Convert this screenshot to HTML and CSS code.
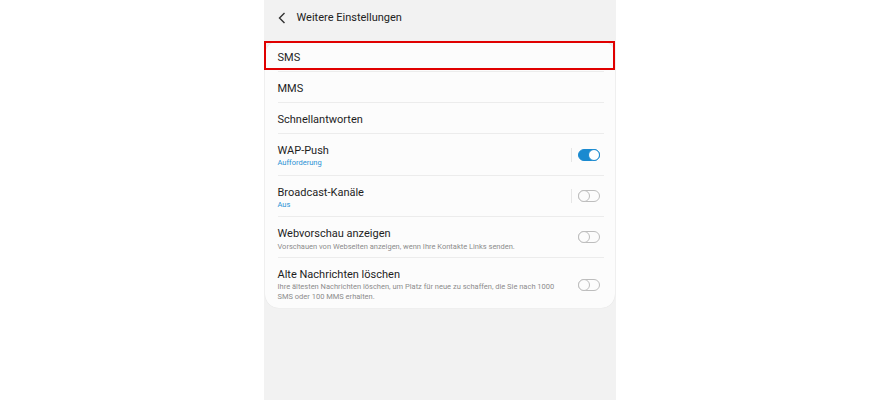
FILE: index.html
```html
<!DOCTYPE html>
<html lang="de">
<head>
<meta charset="utf-8">
<link rel="stylesheet" href="styles.css">
</head>
<body>
<div class="screen">
  <div class="header">
    <svg class="back" width="8" height="12" viewBox="0 0 8 12"><path d="M6.5 1 L1.5 6 L6.5 11" fill="none" stroke="#333" stroke-width="1.4"/></svg>
    <span class="title">Weitere Einstellungen</span>
  </div>
  <div class="card">
    <div class="highlight"></div>
    <div class="row simple"><div class="text"><div class="label">SMS</div></div></div>
    <div class="row simple"><div class="text"><div class="label">MMS</div></div></div>
    <div class="row simple"><div class="text"><div class="label">Schnellantworten</div></div></div>
    <div class="row two wap">
      <div class="text"><div class="label">WAP-Push</div><div class="sub">Aufforderung</div></div>
      <span class="vline"></span>
      <span class="toggle on"><span class="knob"></span></span>
    </div>
    <div class="row two">
      <div class="text"><div class="label">Broadcast-Kanäle</div><div class="sub">Aus</div></div>
      <span class="vline"></span>
      <span class="toggle"><span class="knob"></span></span>
    </div>
    <div class="row two web">
      <div class="text"><div class="label">Webvorschau anzeigen</div><div class="desc">Vorschauen von Webseiten anzeigen, wenn Ihre Kontakte Links senden.</div></div>
      <span class="toggle"><span class="knob"></span></span>
    </div>
    <div class="row last">
      <div class="text"><div class="label">Alte Nachrichten löschen</div><div class="desc">Ihre ältesten Nachrichten löschen, um Platz für neue zu schaffen, die Sie nach 1000 SMS oder 100 MMS erhalten.</div></div>
      <span class="toggle"><span class="knob"></span></span>
    </div>
  </div>
</div>
</body>
</html>
```
FILE: styles.css
```css
html, body { margin: 0; padding: 0; background: #ffffff; }
body { display: flex; justify-content: center; font-family: Roboto, "Noto Sans", sans-serif; }
.screen { width: 352px; height: 400px; background: #f2f2f2; }
.header { height: 35px; display: flex; align-items: center; padding-left: 14px; box-sizing: border-box; }
.back { margin-right: 11px; }
.title { font-size: 11px; color: #222; }
.card { position: relative; margin: 6px 1px 0 1px; background: #fcfcfc; border-radius: 14px; padding: 0 11px 0 13px; box-shadow: 0 0 1px rgba(0,0,0,0.12); }
.highlight { position: absolute; left: -1px; right: 0; top: 0; height: 29px; border: 2px solid #e00000; box-sizing: border-box; }
.row { display: flex; align-items: center; border-bottom: 1px solid #ececec; box-sizing: border-box; }
.row.simple { height: 31px; padding-top: 2px; }
.row.simple:first-of-type { padding-top: 3px; }
.row.two { height: 41px; padding-top: 3px; }
.row.two.wap { height: 42px; }
.row.two.web { padding-top: 5px; }
.row.last { border-bottom: none; height: 50px; align-items: flex-start; padding-top: 10px; }
.row.last .toggle { margin-top: 11px; }
.row.last .desc { margin-top: 1px; }
.text { flex: 1; min-width: 0; }
.label { font-size: 11px; color: #1e1e1e; line-height: 13px; }
.sub { font-size: 7.5px; color: #2a93d5; line-height: 11px; }
.desc { font-size: 7.5px; color: #8c8c8c; line-height: 9.5px; margin-top: 2px; padding-right: 22px; }
.vline { width: 1px; height: 14px; background: #e6e6e6; margin-right: 6px; margin-top: -3px; }
.row.two .toggle { margin-top: -3px; }
.row.two.web .toggle { margin-top: -5px; }
.toggle { position: relative; width: 22px; height: 12px; border: 1px solid #bdbdbd; border-radius: 7px; box-sizing: border-box; margin-right: 4px; flex-shrink: 0; }
.toggle .knob { position: absolute; left: -1px; top: -1px; width: 12px; height: 12px; border-radius: 50%; border: 1px solid #bdbdbd; box-sizing: border-box; background: #fcfcfc; }
.toggle.on { background: #1a8ad0; border-color: #1a8ad0; }
.toggle.on .knob { left: auto; right: -1px; border-color: #1a8ad0; background: #fff; }
```
